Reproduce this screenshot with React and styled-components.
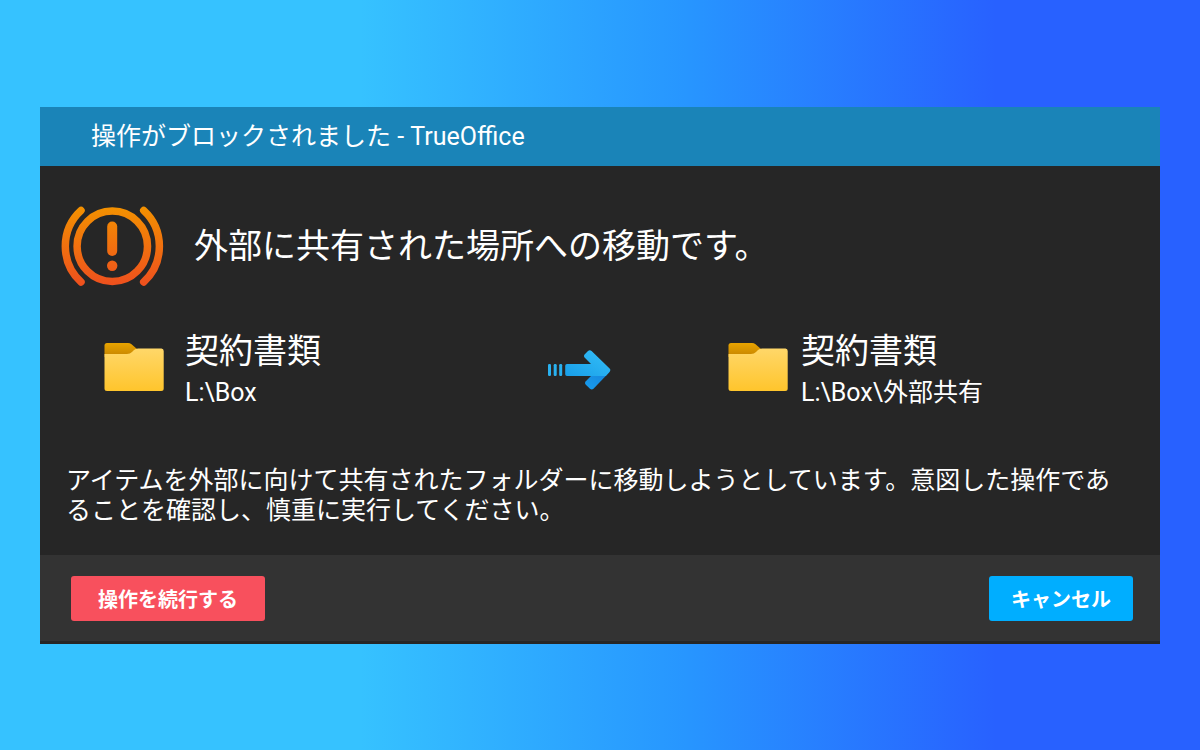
import React from "react"
import styled, { createGlobalStyle } from "styled-components"

const GlobalStyle = createGlobalStyle`
  * {
    box-sizing: border-box;
  }
  body {
    margin: 0;
    font-family: Roboto, "Noto Sans CJK JP", sans-serif;
    color: #fff;
  }
`

const Page = styled.main`
  min-height: 100vh;
  padding: 107px 40px 106px;
  background: linear-gradient(90deg, #36c2ff 30%, #2796ff 57%, #2861ff 83%);
`

const Dialog = styled.section`
  background: #262626;
  border-bottom: 3px solid #262626;
`

const TitleBar = styled.header`
  padding: 0 51px;
  background: #1a84b8;
`

const Title = styled.h1`
  margin: 0;
  font-size: 25px;
  font-weight: 400;
  line-height: 59px;
`

const Body = styled.div`
  padding: 40px 0 29px;
`

const Alert = styled.div`
  display: flex;
  align-items: center;
  gap: 30px;
  padding: 0 20px;
`

const AlertText = styled.h2`
  margin: 0;
  font-size: 34px;
  font-weight: 400;
  line-height: 42px;
`

const Transfer = styled.div`
  display: grid;
  grid-template-columns: 37fr 15fr 36fr;
  align-items: start;
  margin-top: 44px;
  padding-left: 64px;
`

const Location = styled.div`
  display: flex;
  align-items: flex-start;
  gap: ${({ $gap }) => $gap};
`

const LocationText = styled.div`
  display: flex;
  flex-direction: column;
`

const Name = styled.span`
  font-size: 34px;
  line-height: 42px;
`

const Path = styled.span`
  font-size: 25px;
  line-height: 42px;
`

const Message = styled.p`
  margin: 52px 0 0;
  padding: 0 26px;
  font-size: 25px;
  line-height: 30px;
`

const Footer = styled.footer`
  display: flex;
  align-items: center;
  justify-content: space-between;
  padding: 21px 27px 20px 31px;
  background: #333;
`

const Button = styled.button`
  padding: 4px ${({ $primary }) => ($primary ? "22px" : "27px")} 0;
  border: 0;
  border-radius: 3px;
  background: ${({ $primary }) => ($primary ? "#00aeff" : "#f8505d")};
  color: #fff;
  font-family: inherit;
  font-size: 20px;
  font-weight: 700;
  line-height: 41px;
  cursor: pointer;
`

const FolderSvg = styled.svg`
  flex: none;
  margin-top: 13px;
`

const ArrowSvg = styled.svg`
  margin-top: 20px;
`

const WarningIcon = () => (
  <svg width="104" height="80" viewBox="0 0 104 80" fill="none" aria-hidden="true">
    <defs>
      <linearGradient id="warning" gradientUnits="userSpaceOnUse" x1="0" y1="0" x2="0" y2="80">
        <stop offset="0" stopColor="#f39200" />
        <stop offset="1" stopColor="#ee4f1e" />
      </linearGradient>
    </defs>
    <g stroke="url(#warning)" strokeWidth="7.5" strokeLinecap="round">
      <circle cx="52.3" cy="40.3" r="35.2" />
      <path d="M21 4.5A48.6 48.6 0 0 0 21 76" />
      <path d="M83.7 4.5A48.6 48.6 0 0 1 83.7 76" />
    </g>
    <rect x="47.2" y="15.5" width="10" height="34.5" rx="5" fill="url(#warning)" />
    <circle cx="52.2" cy="59.8" r="5.2" fill="url(#warning)" />
  </svg>
)

const FolderIcon = ({ id }) => (
  <FolderSvg width="60" height="48" viewBox="0 0 60 48" aria-hidden="true">
    <defs>
      <linearGradient id={`${id}-tab`} x1="0" y1="0" x2="0" y2="1">
        <stop offset="0" stopColor="#e9a400" />
        <stop offset="1" stopColor="#c48300" />
      </linearGradient>
      <linearGradient id={`${id}-front`} x1="0" y1="0" x2="0" y2="1">
        <stop offset="0" stopColor="#ffd769" />
        <stop offset="1" stopColor="#ffc52c" />
      </linearGradient>
    </defs>
    <path d="M0.5 2.5Q0.5 0 3 0H24Q26 0 27.5 1.2L33 6V14H0.5Z" fill={`url(#${id}-tab)`} />
    <path
      d="M0.5 11H23Q26 11 28 9L30 7Q31.5 5.5 34 5.5H57.5Q59.7 5.5 59.7 8V45.5Q59.7 48 57.2 48H3Q0.5 48 0.5 45.5Z"
      fill={`url(#${id}-front)`}
    />
  </FolderSvg>
)

const ArrowIcon = () => (
  <ArrowSvg width="63" height="40" viewBox="0 0 63 40" aria-hidden="true">
    <defs>
      <linearGradient id="arrow" x1="0" y1="1" x2="1" y2="0">
        <stop offset="0" stopColor="#189ee8" />
        <stop offset="1" stopColor="#35bff8" />
      </linearGradient>
      <linearGradient id="arrow-low" x1="0" y1="1" x2="1" y2="0">
        <stop offset="0" stopColor="#179cee" />
        <stop offset="1" stopColor="#1782d8" />
      </linearGradient>
    </defs>
    <g fill="#29b1f0">
      <rect x="0" y="14" width="3" height="12" rx="1.2" />
      <rect x="5.7" y="14" width="3" height="12" rx="1.2" />
      <rect x="11.2" y="14" width="3" height="12" rx="1.2" />
    </g>
    <path
      d="M43.5 25.5L37.8 31.2Q36.2 33 37.8 34.7L42 38.8Q43.8 40.3 45.5 38.8L61.5 22V19.5Z"
      fill="url(#arrow-low)"
    />
    <path
      d="M19 14H43L36.8 7.8Q35.2 6 36.8 4.3L40 1.1Q41.8 -0.5 43.6 1.1L61.6 18.4Q63.1 20 61.6 21.8L57.8 26H19Q17.2 26 17.2 24.2V15.8Q17.2 14 19 14Z"
      fill="url(#arrow)"
    />
  </ArrowSvg>
)

const App = () => (
  <>
    <GlobalStyle />
    <Page>
      <Dialog role="alertdialog" aria-labelledby="title" aria-describedby="message">
        <TitleBar>
          <Title id="title">操作がブロックされました - TrueOffice</Title>
        </TitleBar>

        <Body>
          <Alert>
            <WarningIcon />
            <AlertText>外部に共有された場所への移動です。</AlertText>
          </Alert>

          <Transfer>
            <Location $gap="21px">
              <FolderIcon id="source" />
              <LocationText>
                <Name>契約書類</Name>
                <Path>L:\Box</Path>
              </LocationText>
            </Location>
            <ArrowIcon />
            <Location $gap="13px">
              <FolderIcon id="target" />
              <LocationText>
                <Name>契約書類</Name>
                <Path>L:\Box\外部共有</Path>
              </LocationText>
            </Location>
          </Transfer>

          <Message id="message">
            アイテムを外部に向けて共有されたフォルダーに移動しようとしています。意図した操作であることを確認し、慎重に実行してください。
          </Message>
        </Body>

        <Footer>
          <Button type="button">操作を続行する</Button>
          <Button type="button" $primary>キャンセル</Button>
        </Footer>
      </Dialog>
    </Page>
  </>
)

export default App
